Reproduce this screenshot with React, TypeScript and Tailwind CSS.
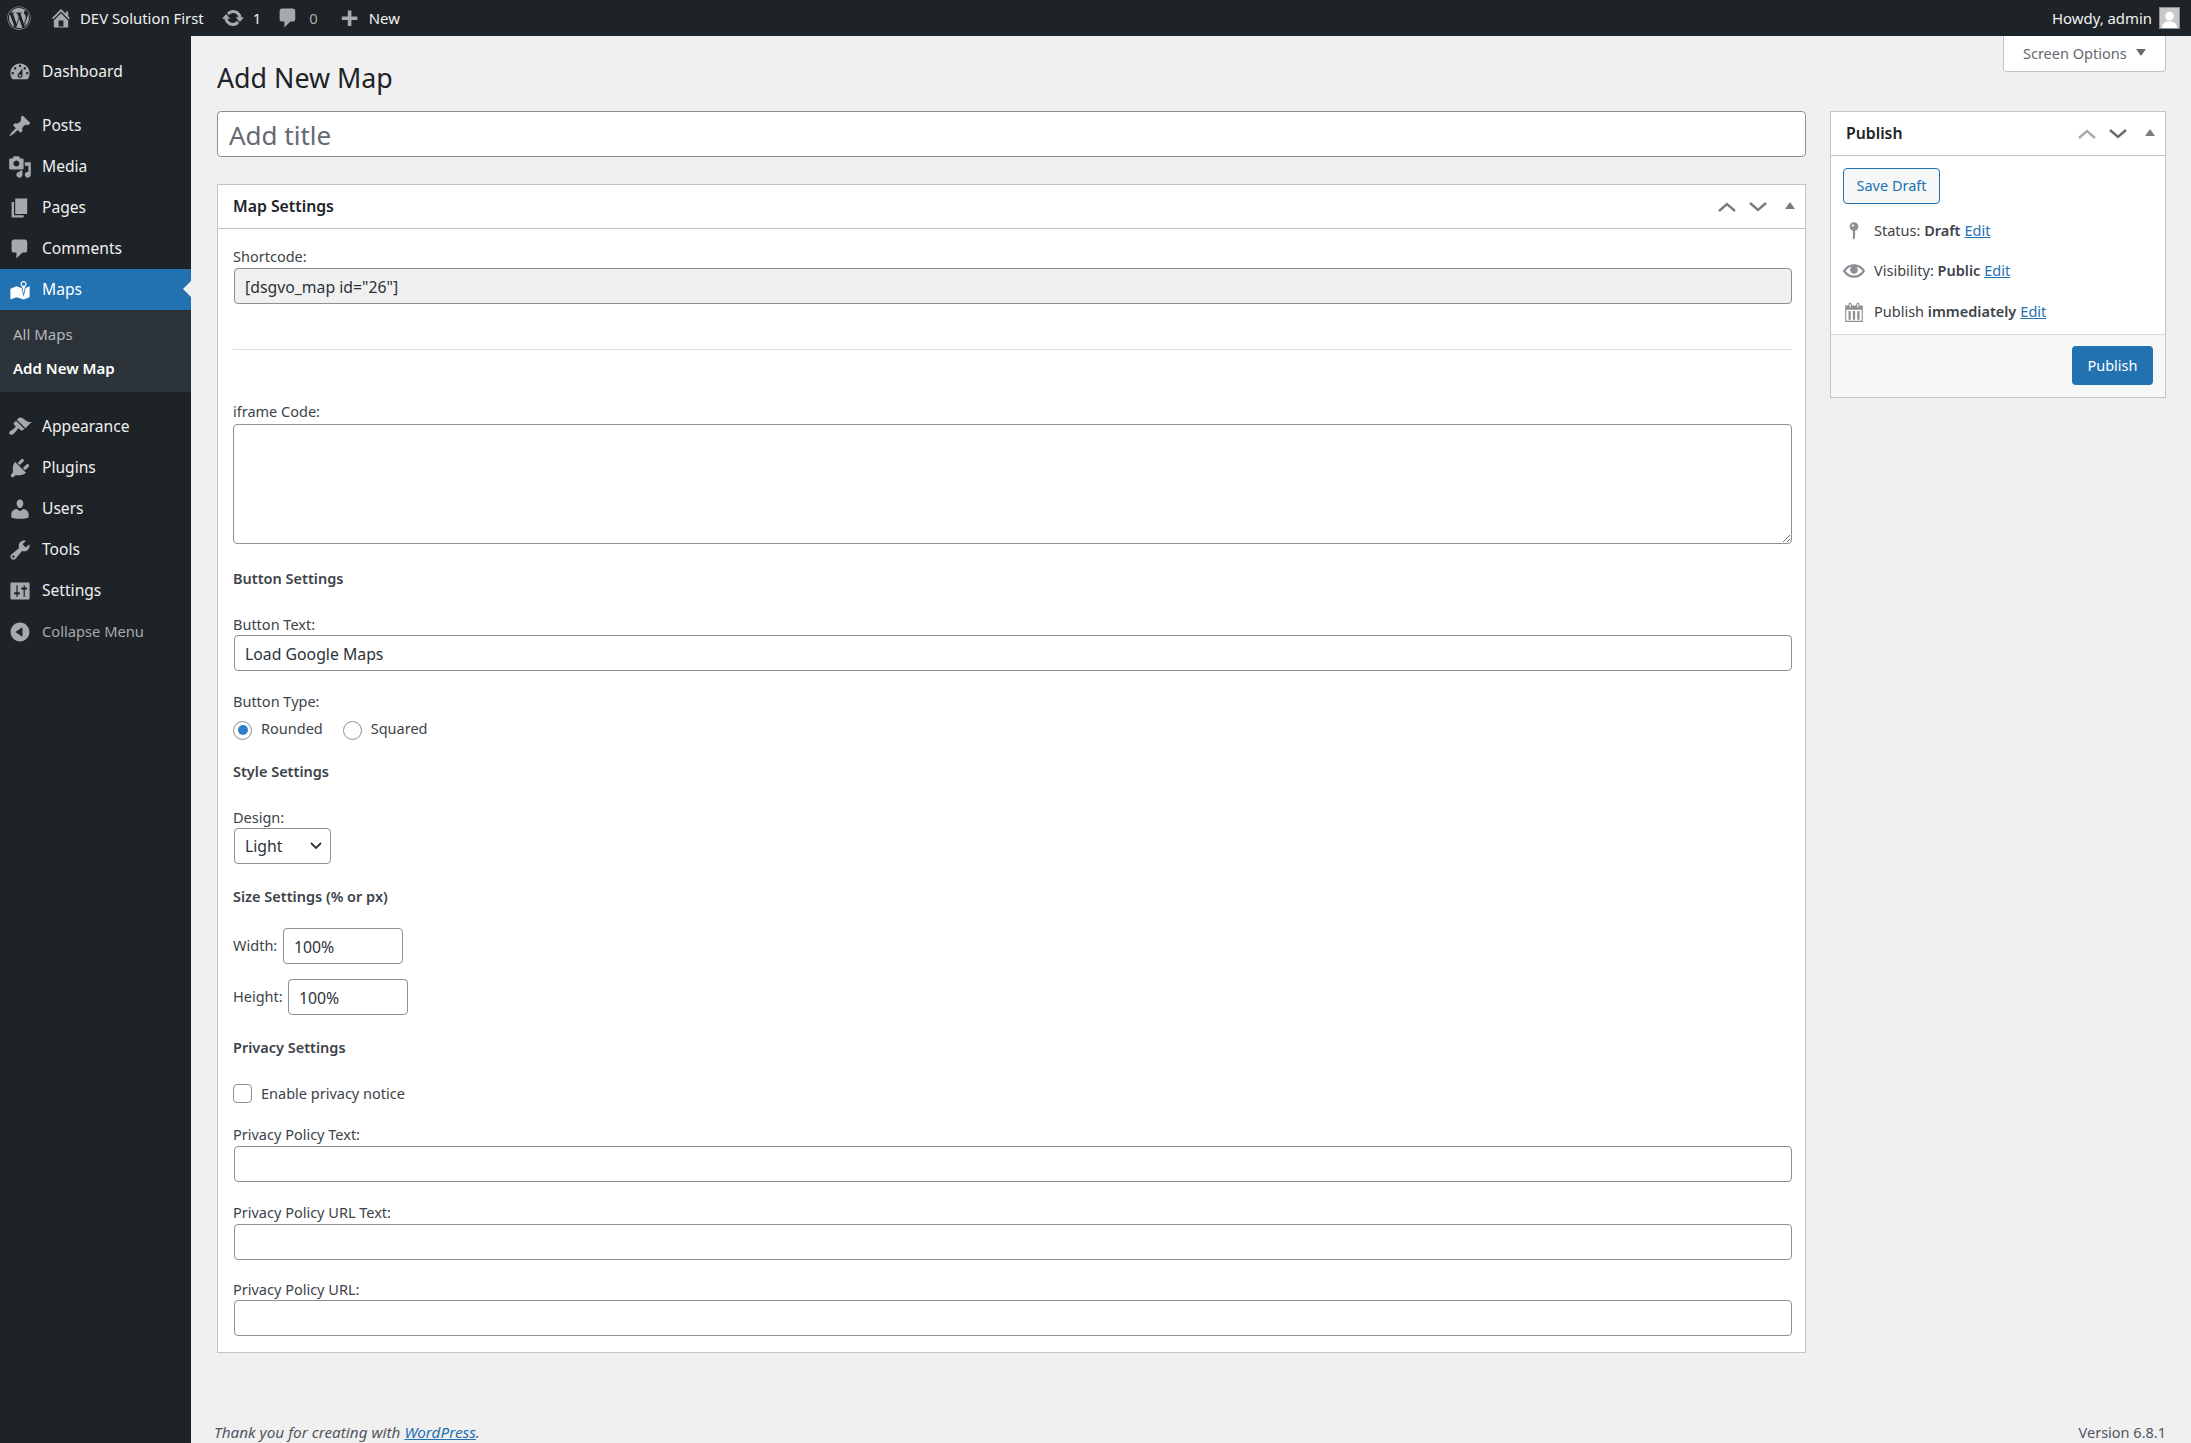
import type { ReactNode } from 'react';
import { FaWordpress } from 'react-icons/fa';

const paths: Record<string, string> = {
    dashboard: 'M3.76 16h12.48c1.1-1.37 1.76-3.11 1.76-5 0-4.42-3.58-8-8-8s-8 3.58-8 8c0 1.89.66 3.63 1.76 5zM10 4c.55 0 1 .45 1 1s-.45 1-1 1-1-.45-1-1 .45-1 1-1zM6 6c.55 0 1 .45 1 1s-.45 1-1 1-1-.45-1-1 .45-1 1-1zm8 0c.55 0 1 .45 1 1s-.45 1-1 1-1-.45-1-1 .45-1 1-1zm-5.37 5.55L12 7v6c0 1.1-.9 2-2 2s-2-.9-2-2c0-.57.24-1.08.63-1.45zM4 10c.55 0 1 .45 1 1s-.45 1-1 1-1-.45-1-1 .45-1 1-1zm12 0c.55 0 1 .45 1 1s-.45 1-1 1-1-.45-1-1 .45-1 1-1zm-5 3c0-.55-.45-1-1-1s-1 .45-1 1 .45 1 1 1 1-.45 1-1z',
    post: 'M10.44 3.02l1.82-1.82 6.36 6.35-1.83 1.82c-1.05-.68-2.48-.57-3.41.36l-.75.75c-.92.93-1.04 2.35-.35 3.41l-1.83 1.82-2.41-2.41-2.8 2.79c-.42.42-3.38 2.71-3.8 2.29s1.86-3.39 2.28-3.81l2.79-2.79L4.1 9.36l1.83-1.82c1.05.69 2.48.57 3.4-.36l.75-.75c.93-.92 1.05-2.35.36-3.41z',
    media: 'M13 11V4c0-.55-.45-1-1-1h-1.67L9 1H5L3.67 3H2c-.55 0-1 .45-1 1v7c0 .55.45 1 1 1h10c.55 0 1-.45 1-1zM7 4.5c1.38 0 2.5 1.12 2.5 2.5S8.38 9.5 7 9.5 4.5 8.38 4.5 7 5.62 4.5 7 4.5zM14 6h5v10.5c0 1.38-1.12 2.5-2.5 2.5S14 17.88 14 16.5s1.12-2.5 2.5-2.5c.17 0 .34.02.5.05V9h-3V6zm-4 8.05V13h2v3.5c0 1.38-1.12 2.5-2.5 2.5S7 17.88 7 16.5 8.12 14 9.5 14c.17 0 .34.02.5.05z',
    page: 'M6 15V2h10v13H6zm-1 1h8v2H3V5h2v11z',
    comment: 'M5 2h9c1.1 0 2 .9 2 2v7c0 1.1-.9 2-2 2h-2l-5 5v-5H5c-1.1 0-2-.9-2-2V4c0-1.1.9-2 2-2z',
    map: 'M13 13.14l1.17-5.94c.79-.43 1.33-1.25 1.33-2.2 0-1.38-1.12-2.5-2.5-2.5S10.5 3.62 10.5 5c0 .95.54 1.77 1.33 2.2zm0-9.64c.83 0 1.5.67 1.5 1.5s-.67 1.5-1.5 1.5-1.5-.67-1.5-1.5.67-1.5 1.5-1.5zm1.72 4.8L18 6.97v9L13.12 18 7 15.97l-5 2v-9l5-2 4.27 1.41 1.73 7.3z',
    appearance: 'M14.48 11.06L7.41 3.99l1.5-1.5c.5-.56 2.3-.47 3.51.32 1.21.8 1.43 1.28 2.91 2.1 1.18.64 2.45 1.26 4.45.85zm-.71.71L6.7 4.7 4.93 6.47c-.39.39-.39 1.02 0 1.41l1.06 1.06c.39.39.39 1.03 0 1.42-.6.6-1.43 1.11-2.21 1.69-.35.26-.7.53-1.01.84C1.43 13.23.4 14.96 1.5 16.06c1.1 1.1 2.84.07 4.18-1.27.31-.31.58-.66.85-1.01.57-.78 1.08-1.61 1.69-2.21.39-.39 1.02-.39 1.41 0l1.06 1.06c.39.39 1.02.39 1.41 0z',
    plugin: 'M13.11 4.36L9.87 7.6 8 5.73l3.24-3.24c.35-.34 1.05-.2 1.56.32.52.51.66 1.21.31 1.55zm-8 1.77l.91-1.12 9.01 9.01-1.19.84c-.71.71-2.63 1.16-3.82 1.16H6.14L4.9 17.26c-.59.59-1.54.59-2.12 0-.59-.58-.59-1.53 0-2.12l1.24-1.24v-3.88c0-1.13.4-3.19 1.09-3.89zm7.26 3.97l3.24-3.24c.34-.35 1.04-.21 1.55.31.52.51.66 1.21.31 1.55l-3.24 3.25z',
    users: 'M10 9.25c-2.27 0-2.73-3.44-2.73-3.44C7 4.02 7.82 2 9.97 2c2.16 0 2.98 2.02 2.71 3.81 0 0-.41 3.44-2.68 3.44zm0 2.57L12.72 10c2.39 0 4.52 2.33 4.52 4.53v2.49s-3.65 1.13-7.24 1.13c-3.65 0-7.24-1.13-7.24-1.13v-2.49c0-2.25 1.94-4.48 4.47-4.48z',
    tools: 'M16.68 9.77c-1.34 1.34-3.3 1.67-4.95.99l-5.41 6.52c-.99.99-2.59.99-3.58 0s-.99-2.59 0-3.57l6.52-5.42c-.68-1.65-.35-3.61.99-4.95 1.28-1.28 3.12-1.62 4.72-1.06l-2.89 2.89 2.82 2.82 2.86-2.87c.53 1.58.18 3.39-1.08 4.65zM3.81 16.21c.4.39 1.04.39 1.43 0 .4-.4.4-1.04 0-1.43-.39-.4-1.03-.4-1.43 0-.39.39-.39 1.03 0 1.43z',
    settings: 'M18 16V4c0-.55-.45-1-1-1H3c-.55 0-1 .45-1 1v12c0 .55.45 1 1 1h14c.55 0 1-.45 1-1zM8 11h1c.55 0 1 .45 1 1s-.45 1-1 1H8v1.5c0 .28-.22.5-.5.5s-.5-.22-.5-.5V13H6c-.55 0-1-.45-1-1s.45-1 1-1h1V5.5c0-.28.22-.5.5-.5s.5.22.5.5V11zm5-2h-1c-.55 0-1-.45-1-1s.45-1 1-1h1V5.5c0-.28.22-.5.5-.5s.5.22.5.5V7h1c.55 0 1 .45 1 1s-.45 1-1 1h-1v5.5c0 .28-.22.5-.5.5s-.5-.22-.5-.5V9z',
    collapse: 'M10 2.16c4.33 0 7.84 3.51 7.84 7.84s-3.51 7.84-7.84 7.84S2.16 14.33 2.16 10 5.71 2.16 10 2.16zm2 11.72V6.12L6.18 9.97z',
    home: 'M16 8.5l1.53 1.53-1.06 1.06L10 4.62l-6.47 6.47-1.06-1.06L10 2.5l4 4v-2h2v4zm-6-2.46l6 5.99V18H4v-5.97zM12 17v-5H8v5h4z',
    update: 'M10.2 3.28c3.53 0 6.43 2.61 6.92 6h2.08l-3.5 4-3.5-4h2.32c-.45-1.97-2.21-3.45-4.32-3.45-1.45 0-2.73.71-3.54 1.78L4.95 5.66C6.23 4.2 8.11 3.28 10.2 3.28zm-.4 13.44c-3.52 0-6.43-2.61-6.92-6H.8l3.5-4c1.17 1.33 2.33 2.67 3.5 4H5.48c.45 1.97 2.21 3.45 4.32 3.45 1.45 0 2.73-.71 3.54-1.78l1.71 1.95c-1.28 1.46-3.15 2.38-5.25 2.38z',
    plus: 'M17 7v3h-5v5H9v-5H4V7h5V2h3v5h5z',
    pin: 'M14 6c0 1.86-1.28 3.41-3 3.86V16c0 1-2 2-2 2V9.86c-1.72-.45-3-2-3-3.86 0-2.21 1.79-4 4-4s4 1.79 4 4zM8 5c0 .55.45 1 1 1s1-.45 1-1-.45-1-1-1-1 .45-1 1z',
    eye: 'M19.7 9.4C17.7 6 14 3.9 10 3.9S2.3 6 .3 9.4L0 10l.3.6c2 3.4 5.7 5.5 9.7 5.5s7.7-2.1 9.7-5.5l.3-.6-.3-.6zM10 14.1c-3.1 0-6-1.6-7.7-4.1C3.6 8 5.7 6.6 8 6.1c-.9.6-1.5 1.7-1.5 2.9 0 1.9 1.6 3.5 3.5 3.5s3.5-1.6 3.5-3.5c0-1.2-.6-2.3-1.5-2.9 2.3.5 4.4 1.9 5.7 3.9-1.7 2.5-4.6 4.1-7.7 4.1z',
    calendar: 'M15 4h3v15H2V4h3V3c0-.41.15-.76.44-1.06.29-.29.65-.44 1.06-.44s.77.15 1.06.44c.29.3.44.65.44 1.06v1h4V3c0-.41.15-.76.44-1.06.29-.29.65-.44 1.06-.44s.77.15 1.06.44c.29.3.44.65.44 1.06v1zM6 3v2.5c0 .14.05.26.15.36.09.09.21.14.35.14s.26-.05.35-.14c.1-.1.15-.22.15-.36V3c0-.14-.05-.26-.15-.35-.09-.1-.21-.15-.35-.15s-.26.05-.35.15c-.1.09-.15.21-.15.35zm7 0v2.5c0 .14.05.26.14.36.1.09.22.14.36.14s.26-.05.36-.14c.09-.1.14-.22.14-.36V3c0-.14-.05-.26-.14-.35-.1-.1-.22-.15-.36-.15s-.26.05-.36.15c-.09.09-.14.21-.14.35zm4 15V8H3v10h14zM5 9h2v8H5zm4 0h2v8H9zm4 0h2v8h-2z',
};

const Icon = ({ name, className }: { name: string, className: string }) => (
    <svg viewBox="0 0 20 20" fill="currentColor" className={className}>
        <path d={paths[name]} />
    </svg>
);

const MenuItem = ({ icon, label, active }: { icon: string, label: string, active?: boolean }) => (
    <div className={`relative flex items-center h-[41px] ${active ? 'bg-[#2271b1] text-white' : 'text-[#f0f0f1]'}`}>
        <Icon name={icon} className={`w-6 h-6 ml-[8px] mr-[10px] ${active ? 'text-white' : 'text-[#a7aaad]'}`} />
        <span className="pt-px">{label}</span>
        {active && <span className="absolute right-0 top-[12px] border-y-[8px] border-r-[8px] border-y-transparent border-r-[#f0f0f1]" />}
    </div>
);

const Sidebar = () => (
    <aside className="w-[191px] shrink-0 bg-[#1d2327] pt-[15px] text-[15.6px]">
        <MenuItem icon="dashboard" label="Dashboard" />
        <div className="h-[13px]" />
        <MenuItem icon="post" label="Posts" />
        <MenuItem icon="media" label="Media" />
        <MenuItem icon="page" label="Pages" />
        <MenuItem icon="comment" label="Comments" />
        <MenuItem icon="map" label="Maps" active />
        <div className="bg-[#2c3338] h-[82px] pt-[7px] pl-[13px] text-[15px] leading-[34px]">
            <div className="text-[#b4b9be]">All Maps</div>
            <div className="text-white font-semibold">Add New Map</div>
        </div>
        <div className="h-[14px]" />
        <MenuItem icon="appearance" label="Appearance" />
        <MenuItem icon="plugin" label="Plugins" />
        <MenuItem icon="users" label="Users" />
        <MenuItem icon="tools" label="Tools" />
        <MenuItem icon="settings" label="Settings" />
        <div className="flex items-center h-[41px] text-[#a7aaad] text-[14.7px]">
            <Icon name="collapse" className="w-6 h-6 ml-[8px] mr-[10px]" />
            <span>Collapse Menu</span>
        </div>
    </aside>
);

const AdminBar = () => (
    <header className="flex items-center h-9 bg-[#1d2327] text-[#f0f0f1] text-[14.9px] leading-[34px] pr-[11px]">
        <FaWordpress className="w-6 h-6 ml-[7px] text-[#a7aaad]" />
        <Icon name="home" className="w-6 h-6 ml-[18px] text-[#a7aaad]" />
        <span className="ml-[7px]">DEV Solution First</span>
        <Icon name="update" className="w-6 h-6 ml-[17px] text-[#a7aaad]" />
        <span className="ml-[8px]">1</span>
        <Icon name="comment" className="w-6 h-6 ml-[15px] text-[#a7aaad]" />
        <span className="ml-[9px] text-[#a7aaad]">0</span>
        <Icon name="plus" className="w-6 h-6 ml-[19px] mt-[4px] text-[#a7aaad]" />
        <span className="ml-[8px]">New</span>
        <span className="ml-auto">Howdy, admin</span>
        <span className="ml-[7px] w-[21px] h-[22px] border border-[#8c8f94] bg-[#c8c8c8] overflow-hidden">
            <svg viewBox="0 0 20 20" fill="#ffffff" className="w-full h-full">
                <circle cx="10" cy="8" r="4.6" />
                <path d="M2 21c0-5 3.5-7.5 8-7.5s8 2.5 8 7.5z" />
            </svg>
        </span>
    </header>
);

const inputClass = 'block h-9 border border-[#8c8f94] rounded-[4px] px-[10px] pt-px text-[#2c3338] text-[15.8px] outline-none';

const Field = ({ label, value, top, labelTop, gray }: { label: string, value?: string, top: string, labelTop: string, gray?: boolean }) => (
    <>
        <div className={`h-5 leading-[18px] ${labelTop}`}>{label}</div>
        <div className={`pl-px ${top}`}>
            <input
                readOnly
                value={value ?? ''}
                className={`${inputClass} w-full ${gray ? 'bg-[#f0f0f1]' : 'bg-white'}`}
            />
        </div>
    </>
);

const Heading = ({ children, className }: { children: ReactNode, className: string }) => (
    <div className={`h-5 leading-[18px] font-semibold ${className}`}>{children}</div>
);

const BoxControls = ({ dim }: { dim?: boolean }) => (
    <div className="flex items-center ml-auto">
        <svg viewBox="0 0 18 12" fill="none" strokeWidth="2.4" className={`w-[18px] h-3 ${dim ? 'stroke-[#a7aaad]' : 'stroke-[#787c82]'}`}>
            <path d="M1 10l8-7 8 7" />
        </svg>
        <svg viewBox="0 0 18 12" fill="none" strokeWidth="2.4" className={`w-[18px] h-3 ml-[13px] ${dim ? 'stroke-[#646970]' : 'stroke-[#787c82]'}`}>
            <path d="M1 2l8 7 8-7" />
        </svg>
        <svg viewBox="0 0 10 7" fill="#787c82" className="w-[10px] h-[7px] ml-[18px] mb-[2px]">
            <path d="M5 0l5 7H0z" />
        </svg>
    </div>
);

const MapSettings = () => (
    <section className="border border-[#c3c4c7] bg-white mt-[27px] h-[1169px] text-[14.5px] text-[#3c434a]">
        <div className="flex items-center h-[44px] border-b border-[#c3c4c7] pl-[15px] pr-[10px]">
            <h2 className="pt-px text-[15.8px] font-semibold text-[#1d2327]">Map Settings</h2>
            <BoxControls />
        </div>
        <div className="pl-[15px] pr-[13px]">
            <Field label="Shortcode:" value={'[dsgvo_map id="26"]'} labelTop="mt-[18px]" top="mt-px" gray />
            <hr className="mt-[45px] border-[#dcdcde]" />
            <div className="h-5 leading-[18px] mt-[52px]">iframe Code:</div>
            <textarea readOnly className="block w-full h-[120px] mt-[2px] border border-[#8c8f94] rounded-[4px] outline-none resize-y" />
            <Heading className="mt-[25px]">Button Settings</Heading>
            <Field label="Button Text:" value="Load Google Maps" labelTop="mt-[26px]" top="mt-0" />
            <div className="h-5 leading-[18px] mt-[21px]">Button Type:</div>
            <div className="flex items-center h-5 leading-[16px] mt-[7px]">
                <span className="flex items-center justify-center w-[19px] h-[19px] rounded-full border border-[#8c8f94] mt-[2px]">
                    <span className="w-[10px] h-[10px] rounded-full bg-[#2f7fc6]" />
                </span>
                <span className="ml-[9px] pb-[2px]">Rounded</span>
                <span className="w-[19px] h-[19px] rounded-full border border-[#8c8f94] mt-[2px] ml-[20px]" />
                <span className="ml-[9px] pb-[2px]">Squared</span>
            </div>
            <Heading className="mt-[23px]">Style Settings</Heading>
            <div className="h-5 leading-[20px] mt-[25px]">Design:</div>
            <div className="relative w-[97px] ml-px mt-px">
                <select className={`${inputClass} w-full bg-white appearance-none`} defaultValue="Light">
                    <option>Light</option>
                </select>
                <svg viewBox="0 0 12 8" fill="none" stroke="#2c3338" strokeWidth="1.8" className="absolute right-[9px] top-[14px] w-3 h-2">
                    <path d="M1 1l5 5 5-5" />
                </svg>
            </div>
            <Heading className="mt-[23px]">Size Settings (% or px)</Heading>
            <div className="flex items-center mt-[21px]">
                <span className="w-[50px]">Width:</span>
                <input readOnly value="100%" className={`${inputClass} w-[120px] bg-white`} />
            </div>
            <div className="flex items-center mt-[15px]">
                <span className="w-[55px]">Height:</span>
                <input readOnly value="100%" className={`${inputClass} w-[120px] bg-white`} />
            </div>
            <Heading className="mt-[23px]">Privacy Settings</Heading>
            <div className="flex items-center h-5 mt-[25px]">
                <span className="w-[19px] h-[19px] rounded-[4px] border border-[#8c8f94]" />
                <span className="ml-[9px] pt-px">Enable privacy notice</span>
            </div>
            <Field label="Privacy Policy Text:" labelTop="mt-[22px]" top="mt-px" />
            <Field label="Privacy Policy URL Text:" labelTop="mt-[21px]" top="mt-px" />
            <Field label="Privacy Policy URL:" labelTop="mt-[20px]" top="mt-0" />
        </div>
    </section>
);

const EditLink = () => <a className="text-[#2271b1] underline ml-[4px]">Edit</a>;

const PublishBox = () => (
    <aside className="w-[336px] shrink-0 h-[287px] border border-[#c3c4c7] bg-white text-[14.5px] text-[#3c434a]">
        <div className="flex items-center h-[44px] border-b border-[#c3c4c7] pl-[15px] pr-[10px]">
            <h2 className="pt-px text-[15.8px] font-semibold text-[#1d2327]">Publish</h2>
            <BoxControls dim />
        </div>
        <div className="h-[178px] px-[12px] pt-[12px]">
            <button className="block w-[97px] h-9 border border-[#2271b1] rounded-[4px] bg-[#f6f7f7] text-[#2271b1]">Save Draft</button>
            <div className="flex items-center h-5 mt-[17px]">
                <Icon name="pin" className="w-[22px] h-[22px] text-[#8c8f94]" />
                <span className="ml-[9px]">Status: <b className="font-semibold">Draft</b><EditLink /></span>
            </div>
            <div className="flex items-center h-5 mt-[20px]">
                <Icon name="eye" className="w-[22px] h-[22px] text-[#8c8f94]" />
                <span className="ml-[9px]">Visibility: <b className="font-semibold">Public</b><EditLink /></span>
            </div>
            <div className="flex items-center h-5 mt-[21px]">
                <Icon name="calendar" className="w-[22px] h-[22px] text-[#8c8f94]" />
                <span className="ml-[9px]">Publish <b className="font-semibold">immediately</b><EditLink /></span>
            </div>
        </div>
        <div className="flex justify-end h-[63px] border-t border-[#dcdcde] bg-[#f6f7f7] pt-[11px] pr-[12px]">
            <button className="w-[81px] h-[39px] rounded-[4px] bg-[#2271b1] text-white">Publish</button>
        </div>
    </aside>
);

const App = () => (
    <div className="h-[1443px] overflow-hidden flex flex-col bg-[#f0f0f1] font-['Noto_Sans',sans-serif]">
        <AdminBar />
        <div className="flex flex-1">
            <Sidebar />
            <main className="flex-1 min-w-0 pl-[26px] pr-[25px]">
                <div className="flex items-start h-[75px]">
                    <h1 className="mt-[22px] text-[26.8px] leading-[40px] text-[#1d2327]">Add New Map</h1>
                    <button className="ml-auto flex items-center w-[163px] h-9 pl-[19px] pt-px border border-t-0 border-[#c3c4c7] rounded-b-[4px] bg-white text-[14.5px] text-[#646970]">
                        Screen Options
                        <svg viewBox="0 0 10 7" fill="#646970" className="w-[10px] h-[7px] ml-[9px] mb-[4px]">
                            <path d="M0 0h10L5 7z" />
                        </svg>
                    </button>
                </div>
                <div className="flex gap-6">
                    <div className="flex-1 min-w-0">
                        <input
                            readOnly
                            placeholder="Add title"
                            className="block w-full h-[46px] border border-[#8c8f94] rounded-[4px] bg-white pl-[11px] pt-[2px] text-[26px] outline-none placeholder:text-[#646970]"
                        />
                        <MapSettings />
                    </div>
                    <PublishBox />
                </div>
                <footer className="flex justify-between mt-[69px] -ml-[3px] h-5 leading-5 text-[14.5px] text-[#50575e]">
                    <i className="text-[15.3px]">Thank you for creating with <a className="text-[#2271b1] underline">WordPress</a>.</i>
                    <span>Version 6.8.1</span>
                </footer>
            </main>
        </div>
    </div>
);

export default App;
